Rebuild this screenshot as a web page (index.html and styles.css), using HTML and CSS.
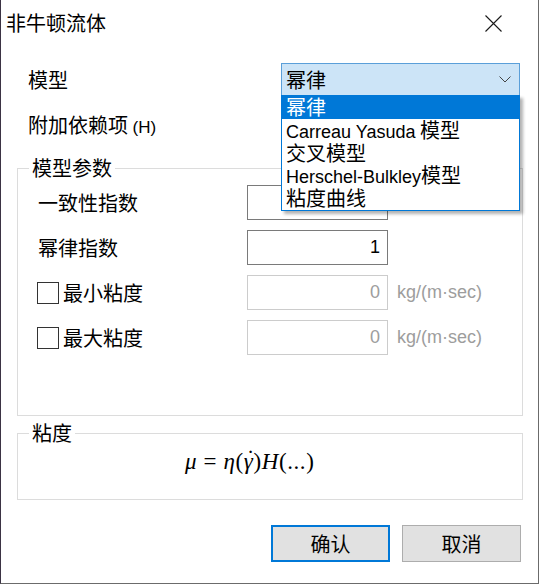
FILE: index.html
```html
<!DOCTYPE html>
<html lang="zh-CN">
<head>
    <meta charset="UTF-8">
    <meta name="viewport" content="width=device-width, initial-scale=1.0">
    <title>非牛顿流体</title>
    <link rel="stylesheet" href="styles.css">
</head>
<body>
    <div class="window">
        <div class="titlebar">
            <span class="title">非牛顿流体</span>
            <svg class="close" width="17" height="17" viewBox="0 0 17 17">
                <path d="M0.5 0.5 L16.5 16.5 M16.5 0.5 L0.5 16.5" stroke="#1a1a1a" stroke-width="1.1" fill="none"/>
            </svg>
        </div>

        <div class="content">
            <div class="row">
                <span class="label">模型</span>
                <div class="combo-wrap">
                    <div class="combo">
                        <span>幂律</span>
                        <svg class="chevron" width="12" height="7" viewBox="0 0 12 7">
                            <path d="M0.5 0.5 L6 6 L11.5 0.5" stroke="#444" stroke-width="1" fill="none"/>
                        </svg>
                    </div>
                    <!-- открытый список -->
                    <ul class="dropdown">
                        <li class="selected">幂律</li>
                        <li><span class="latin">Carreau Yasuda</span> 模型</li>
                        <li>交叉模型</li>
                        <li><span class="latin">Herschel-Bulkley</span>模型</li>
                        <li>粘度曲线</li>
                    </ul>
                </div>
            </div>
            <div class="row">
                <span class="label">附加依赖项 <span class="hotkey">(H)</span></span>
            </div>

            <fieldset class="group params">
                <legend>模型参数</legend>
                <div class="param">
                    <span class="plabel">一致性指数</span>
                    <input class="num" type="text" value="">
                </div>
                <div class="param">
                    <span class="plabel">幂律指数</span>
                    <input class="num" type="text" value="1">
                </div>
                <div class="param check">
                    <label class="plabel"><input type="checkbox" class="box">最小粘度</label>
                    <input class="num" type="text" value="0" disabled>
                    <span class="unit">kg/(m·sec)</span>
                </div>
                <div class="param check">
                    <label class="plabel"><input type="checkbox" class="box">最大粘度</label>
                    <input class="num" type="text" value="0" disabled>
                    <span class="unit">kg/(m·sec)</span>
                </div>
            </fieldset>

            <fieldset class="group viscosity">
                <legend>粘度</legend>
                <div class="formula"><i>μ</i> = <i>η</i>(<i class="dot">γ</i>)<i>H</i>(...)</div>
            </fieldset>

            <div class="buttons">
                <button type="button" class="btn default">确认</button>
                <button type="button" class="btn">取消</button>
            </div>
        </div>
    </div>
</body>
</html>
```

FILE: styles.css
```css
/* Общие стили */
body {
    margin: 0;
    background-color: #fff;
    color: #000;
    font-family: "Noto Sans CJK SC", sans-serif;
    font-size: 20px;
}

.window {
    width: 539px;
    height: 584px;
    box-sizing: border-box;
    border-left: 1px solid #3b3344;
    border-right: 1px solid #6b6b6b;
    border-bottom: 1px solid #6b6b6b;
    background-color: #fff;
}

/* Заголовок окна */
.titlebar {
    height: 46px;
    display: flex;
    align-items: center;
    padding-left: 5px;
    padding-right: 36px;
}

.title {
    line-height: 20px;
}

.close {
    margin-left: auto;
}

.content {
    padding: 17px 15px 0 16px;
}

.row {
    display: flex;
    align-items: center;
    height: 33px;
    padding-left: 11px;
}

.row + .row {
    margin-top: 14px;
}

.label {
    width: 253px;
    line-height: 20px;
}

.hotkey {
    font-family: "Liberation Sans", sans-serif;
    font-size: 17px;
}

.latin {
    font-family: "Liberation Sans", sans-serif;
    font-size: 18px;
}

/* Комбобокс */
.combo-wrap {
    position: relative;
    width: 239px;
}

.combo {
    height: 33px;
    box-sizing: border-box;
    border: 1px solid #5a9fd9;
    background-color: #cce4f7;
    display: flex;
    align-items: center;
    justify-content: space-between;
    padding: 0 8px 0 4px;
    line-height: 20px;
}

.dropdown {
    position: absolute;
    top: 32px;
    left: 0;
    width: 239px;
    box-sizing: border-box;
    margin: 0;
    padding: 0;
    list-style: none;
    background-color: #fff;
    border: 1px solid #0078d7;
    box-shadow: 3px 3px 3px rgba(0, 0, 0, 0.3);
    z-index: 2;
}

.dropdown li {
    height: 22.8px;
    line-height: 22.8px;
    padding-left: 4px;
    white-space: nowrap;
}

.dropdown li.selected {
    background-color: #0078d7;
    color: #fff;
}

/* Группы */
.group {
    margin: 15px 0 0;
    padding: 7px 0 60px 11px;
    border: 1px solid #dcdcdc;
    min-width: 0;
}

.group legend {
    padding: 0 3px;
    line-height: 20px;
}

.param {
    display: flex;
    align-items: center;
    height: 35px;
    padding-left: 9px;
}

.param + .param {
    margin-top: 10px;
}

.plabel {
    width: 209px;
    line-height: 20px;
}

.param.check {
    padding-left: 8px;
}

.param.check .plabel {
    width: 210px;
    display: flex;
    align-items: center;
}

.box {
    appearance: none;
    width: 22px;
    height: 22px;
    margin: 0 4px 0 0;
    border: 1px solid #333;
    background-color: #fff;
}

.num {
    width: 141px;
    height: 35px;
    box-sizing: border-box;
    border: 1px solid #7a7a7a;
    padding: 0 7px;
    font: 18px "Liberation Sans", sans-serif;
    text-align: right;
    background-color: #fff;
    color: #000;
    outline: none;
}

.num:disabled {
    border-color: #cccccc;
    color: #9d9d9d;
}

.unit {
    margin-left: 9px;
    font: 18px "Liberation Sans", sans-serif;
    color: #9d9d9d;
}

.viscosity {
    margin-top: 7px;
    padding: 7px 0 25px 11px;
}

.formula {
    padding-left: 156px;
    font-family: "Liberation Serif", serif;
    font-size: 23px;
    line-height: 24px;
    letter-spacing: 0.6px;
}

/* точка над гаммой */
.dot {
    position: relative;
}

.dot::after {
    content: "\02D9";
    position: absolute;
    left: 3px;
    top: -2px;
    font-style: normal;
}

/* Кнопки */
.buttons {
    display: flex;
    justify-content: flex-end;
    gap: 12px;
    padding-right: 2px;
    margin-top: 25px;
}

.btn {
    width: 119px;
    height: 37px;
    box-sizing: border-box;
    padding: 0;
    background-color: #e1e1e1;
    border: 1px solid #adadad;
    font-family: "Noto Sans CJK SC", sans-serif;
    font-size: 20px;
    line-height: 20px;
    color: #000;
}

.btn.default {
    border: 2px solid #0078d7;
}
```
